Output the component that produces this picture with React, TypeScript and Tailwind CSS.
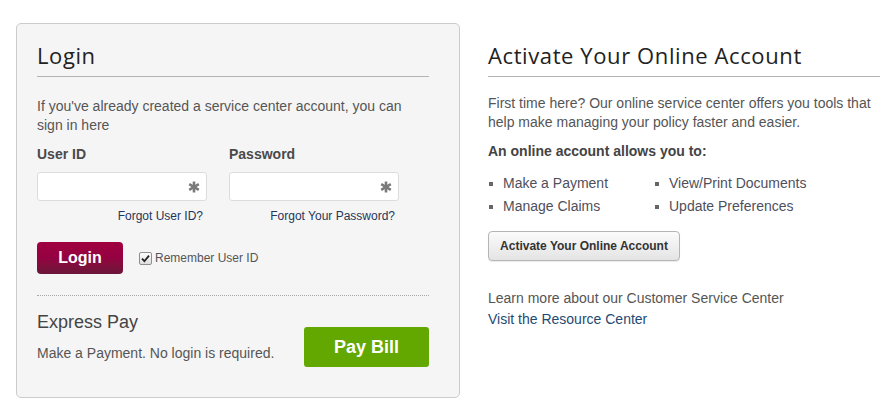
import React from 'react';

const Star = () => (
    <svg width="12" height="12" viewBox="0 0 12 12" className="absolute right-[6px] top-[8px]">
        <g stroke="#7a7a7a" strokeWidth="2.6" strokeLinecap="butt">
            <line x1="6" y1="0.5" x2="6" y2="11.5" />
            <line x1="1.2" y1="3.2" x2="10.8" y2="8.8" />
            <line x1="1.2" y1="8.8" x2="10.8" y2="3.2" />
        </g>
    </svg>
);

const Field = ({ label, forgot }: { label: string; forgot: string }) => (
    <div className="w-[170px] flex flex-col">
        <label className="font-bold text-[14px] leading-[19px] text-[#4a4a4a]">{label}</label>
        <div className="relative mt-[8px] h-[29px] w-[170px] bg-white border border-[#dcdcdc] rounded-[3px]">
            <input className="w-full h-full bg-transparent outline-none px-2 text-[14px]" />
            <Star />
        </div>
        <a className="mt-[7px] text-right pr-[4px] text-[12px] leading-[16px] text-[#26365a]">{forgot}</a>
    </div>
);

const Bullet = ({ text }: { text: string }) => (
    <li className="flex items-center h-[23px]">
        <span className="w-[4px] h-[4px] bg-[#666] ml-[1px] mr-[10px]"></span>
        <span>{text}</span>
    </li>
);

export default function App() {
    const heading = { fontFamily: '"Open Sans", "Noto Sans", sans-serif' };

    return (
        <div className="w-[896px] h-[414px] bg-white flex items-start gap-[28px] pl-[16px] pt-[23px] overflow-hidden text-[#555]" style={{ fontFamily: '"Liberation Sans", Arial, sans-serif' }}>
            {/* login panel */}
            <div className="w-[444px] h-[375px] bg-[#f5f5f5] border border-[#cccccc] rounded-[5px] pl-[20px] pr-[30px] pt-[17px]">
                <div className="border-b border-[#b3b3b3] pb-[7px]">
                    <h2 className="text-[22px] leading-[28px] font-medium tracking-[0.6px] text-[#222]" style={heading}>Login</h2>
                </div>
                <p className="mt-[20px] text-[14px] leading-[19px]">
                    If you've already created a service center account, you can sign in here
                </p>
                <div className="flex gap-[22px] mt-[10px]">
                    <Field label="User ID" forgot="Forgot User ID?" />
                    <Field label="Password" forgot="Forgot Your Password?" />
                </div>
                <div className="flex items-center mt-[18px]">
                    <button className="w-[86px] h-[32px] rounded-[4px] bg-gradient-to-b from-[#a0003f] via-[#940141] to-[#6b1538] text-white font-bold text-[16px]">
                        Login
                    </button>
                    <span className="ml-[16px] w-[13px] h-[13px] border border-[#8f8f8f] rounded-[2px] bg-gradient-to-b from-[#fdfdfd] to-[#dedede] flex items-center justify-center">
                        <svg width="9" height="9" viewBox="0 0 9 9">
                            <path d="M1 4.6 L3.4 7.2 L8 1.6" stroke="#222" strokeWidth="1.8" fill="none" />
                        </svg>
                    </span>
                    <span className="ml-[3px] text-[12px] text-[#555]">Remember User ID</span>
                </div>
                <div className="mt-[21px] border-t border-dotted border-[#a8a8a8]"></div>
                <div className="flex justify-between items-start">
                    <div>
                        <div className="mt-[14px] text-[18px] leading-[24px] text-[#444]">Express Pay</div>
                        <div className="mt-[10px] text-[14px] leading-[19px]">Make a Payment. No login is required.</div>
                    </div>
                    <button className="mt-[31px] w-[125px] h-[40px] rounded-[3px] bg-[#62a800] text-white font-bold text-[18px]">
                        Pay Bill
                    </button>
                </div>
            </div>

            {/* activate column */}
            <div className="w-[392px] pt-[18px]">
                <div className="border-b border-[#b3b3b3] pb-[7px]">
                    <h2 className="text-[22px] leading-[28px] font-medium tracking-[0.6px] text-[#222]" style={heading}>Activate Your Online Account</h2>
                </div>
                <p className="mt-[17px] text-[14px] leading-[19px]">
                    First time here? Our online service center offers you tools that help make managing your policy faster and easier.
                </p>
                <div className="mt-[10px] text-[14px] leading-[19px] font-bold text-[#444]">An online account allows you to:</div>
                <div className="mt-[11px] flex text-[14px] text-[#4f4f5c]">
                    <ul className="w-[166px]">
                        <Bullet text="Make a Payment" />
                        <Bullet text="Manage Claims" />
                    </ul>
                    <ul>
                        <Bullet text="View/Print Documents" />
                        <Bullet text="Update Preferences" />
                    </ul>
                </div>
                <button className="mt-[13px] w-[192px] h-[30px] rounded-[4px] border border-[#b5b5b5] bg-gradient-to-b from-[#fbfbfb] to-[#e4e4e4] shadow-[0_1px_1px_rgba(0,0,0,0.08)] text-[12px] font-bold text-[#333]">
                    Activate Your Online Account
                </button>
                <div className="mt-[27px] text-[14px] leading-[21px]">
                    <a className="block text-[#555]">Learn more about our Customer Service Center</a>
                    <a className="block text-[#1f4a72]">Visit the Resource Center</a>
                </div>
            </div>
        </div>
    );
}
